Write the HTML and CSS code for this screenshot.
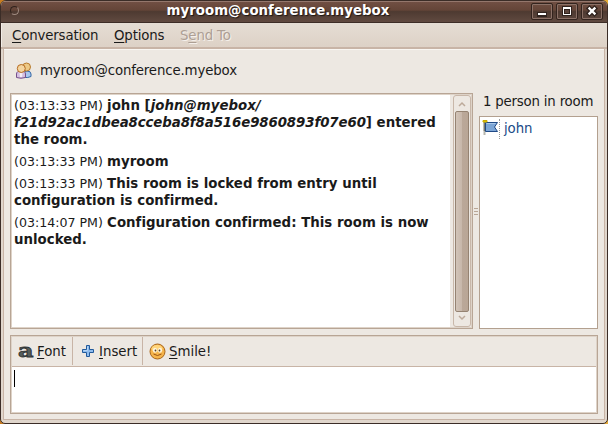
FILE: index.html
```html
<!DOCTYPE html>
<html lang="en">
<head>
<meta charset="utf-8">
<title>myroom@conference.myebox</title>
<link rel="stylesheet" href="styles.css">
</head>
<body>
<div class="window">
  <header class="titlebar">
    <span class="window-menu"></span>
    <h1>myroom@conference.myebox</h1>
    <div class="controls">
      <span class="control"><svg width="20" height="15" shape-rendering="crispEdges"><path d="M5 8h10v5H5z" fill="#30231e"/><path d="M6 9h8v2H6z" fill="#fff"/></svg></span>
      <span class="control"><svg width="20" height="15" shape-rendering="crispEdges"><path d="M5 2h10v10H5z" fill="#30231e"/><path d="M6 3h8v8H6z" fill="#fff"/><path d="M7 5h6v5H7z" fill="#30231e"/><path d="M8 6h4v3H8z" fill="#5b453c"/></svg></span>
      <span class="control"><svg width="20" height="15"><path d="M7.500 4.500l5 5m0-5l-5 5" stroke="#30231e" stroke-width="5" stroke-linecap="square"/><path d="M7.500 4.500l5 5m0-5l-5 5" stroke="#fff" stroke-width="2.400" stroke-linecap="square"/></svg></span>
    </div>
  </header>
  <nav class="menubar">
    <span class="menu-item conversation"><u>C</u>onversation</span>
    <span class="menu-item options"><u>O</u>ptions</span>
    <span class="menu-item disabled">S<u>e</u>nd To</span>
  </nav>
  <main class="content">
    <div class="room-tab">
      <svg class="people" width="18" height="18" viewBox="0 0 18 18">
        <path d="M9 15.500V11q0-2 3-2 4 0 4 3v2.500q-3 1.500-7 1z" fill="#a9c8ee" stroke="#3566a4"/>
        <circle cx="11.500" cy="5" r="4" fill="#edc986" stroke="#b77a2e"/>
        <path d="M1.500 15.500V12q0-3 4.500-3t4.500 3v3.500q-4.500 1.500-9 0z" fill="#d5bfe0" stroke="#75508b"/>
        <path d="M4.500 10.500q1.500 1 3 0l-.5 4.500H5z" fill="#f5edf5"/>
        <circle cx="6.300" cy="6.500" r="4" fill="#f4d5a0" stroke="#b5691f"/>
      </svg>
      <span>myroom@conference.myebox</span>
    </div>
    <div class="room">
      <section class="chat">
        <div class="messages">
          <p><time>(03:13:33 PM)</time> <b>john [<i>john@myebox/<br><span class="resource">f21d92ac1dbea8cceba8f8a516e9860893f07e60</span></i>] entered<br>the room.</b></p>
          <p><time>(03:13:33 PM)</time> <b>myroom</b></p>
          <p><time>(03:13:33 PM)</time> <b>This room is locked from entry until<br>configuration is confirmed.</b></p>
          <p><time>(03:14:07 PM)</time> <b>Configuration confirmed: This room is now<br>unlocked.</b></p>
        </div>
        <div class="scrollbar">
          <svg class="arrow" width="14" height="15"><path d="M4 10l3-3 3 3" fill="none" stroke="#bdaa9a" stroke-width="1.500"/></svg>
          <div class="thumb"></div>
          <svg class="arrow" width="14" height="14"><path d="M4 4l3 3 3-3" fill="none" stroke="#bdaa9a" stroke-width="1.500"/></svg>
        </div>
      </section>
      <div class="splitter"><i></i><i></i><i></i></div>
      <aside class="people-panel">
        <div class="count">1 person in room</div>
        <div class="list">
          <div class="person">
            <svg width="17" height="17" viewBox="0 0 17 17">
              <path d="M2.500 3v9" stroke="#77776d" stroke-width="2"/>
              <path d="M2.500 12v4" stroke="#b5b5ad" stroke-width="2"/>
              <path d="M3.500 3.500h12l-3 4.500 3 4.500h-12z" fill="#7ca5d5" stroke="#204a87"/>
              <path d="M4.500 4.500h9" stroke="#a9c7e8"/>
              <path d="M1 1.500h4v1.500H1z" fill="#edd400" stroke="#c9aa00"/>
            </svg>
            <span class="divider"></span>
            <span class="name">john</span>
          </div>
        </div>
      </aside>
    </div>
    <section class="composer">
      <div class="toolbar">
        <span class="tool font"><svg width="18" height="28" viewBox="0 0 18 28"><text class="font-glyph" x="1" y="19.500" textLength="15.500" lengthAdjust="spacingAndGlyphs">a</text></svg><span><u>F</u>ont</span></span>
        <span class="tool insert"><svg width="14" height="14" viewBox="0 0 14 14"><path d="M5.500 1.500h3v4h4v3h-4v4h-3v-4h-4v-3h4z" fill="#8ebbed" stroke="#225a9b" stroke-linejoin="round"/><path d="M6.500 2.500V6.500H2.500" fill="none" stroke="#b4d5f5"/></svg><span><u>I</u>nsert</span></span>
        <span class="tool smile"><svg width="17" height="17" viewBox="0 0 17 17"><circle cx="8.500" cy="8.500" r="7.500" fill="#f5b44b" stroke="#a8651b"/><ellipse cx="8" cy="5.500" rx="5.500" ry="3.500" fill="#ffd57c"/><ellipse cx="6" cy="7.300" rx="2.100" ry="2.500" fill="#fff5de"/><ellipse cx="11" cy="7.300" rx="2.100" ry="2.500" fill="#fff5de"/><circle cx="6.500" cy="7.500" r=".9" fill="#59401f"/><circle cx="10.500" cy="7.500" r=".9" fill="#59401f"/><path d="M4.500 11q4 3 8 0" fill="none" stroke="#9a5314"/></svg><span><u>S</u>mile!</span></span>
      </div>
      <div class="input"><span class="caret"></span></div>
    </section>
  </main>
</div>
</body>
</html>
```
FILE: styles.css
```css
* { box-sizing: border-box; }
body {
  margin: 0;
  width: 608px;
  height: 424px;
  overflow: hidden;
  background: linear-gradient(90deg, #c87c20 50%, #e4aa36 50%);
  color: #1a1a1a;
  font: 13.333px/17px "DejaVu Sans", sans-serif;
}
svg { display: block; flex: none; }
u { text-decoration: underline; text-decoration-thickness: 1px; text-underline-offset: 2px; text-decoration-skip-ink: none; }
.window {
  height: 424px;
  display: flex;
  flex-direction: column;
  border: 1px solid #3b2d27;
  border-radius: 6px 6px 5px 5px;
  background: #e0d6cc;
  overflow: hidden;
}
.titlebar {
  height: 22px;
  flex: none;
  display: grid;
  grid-template-columns: 30px 1fr 82px;
  border-top: 1px solid #94776c;
  border-bottom: 1px solid #3d2d27;
  background: linear-gradient(#704f43, #644538 40%, #4e3a31 48%, #604a40);
}
.window-menu {
  width: 9px;
  height: 9px;
  margin: 4px 0 0 9px;
  border: 1px solid #30221d;
  border-right-color: #a08b81;
  border-bottom-color: #a08b81;
  border-radius: 50%;
}
h1 {
  margin: 0;
  color: #fff;
  font-size: 13.333px;
  line-height: 17px;
  font-weight: bold;
  letter-spacing: 0.03px;
  text-align: center;
  text-shadow: 1px 1px 1px #1d1512;
  white-space: nowrap;
}
.controls { display: flex; gap: 3px; padding: 1px 0 0 6px; }
.control {
  width: 22px;
  height: 17px;
  flex: none;
  border: 1px solid #33241e;
  border-radius: 2px;
  box-shadow: inset 0 0 0 1px #8b7167;
}
.menubar {
  height: 26px;
  flex: none;
  display: flex;
  padding: 4px 11px;
  letter-spacing: -0.15px;
  background: linear-gradient(#e5ddd4, #ddd1c6);
  border-bottom: 2px solid #c8b4a6;
  box-shadow: inset 1px 0 #f2ece6;
}
.menu-item { white-space: nowrap; }
.conversation { width: 102px; }
.options { width: 66px; }
.disabled { color: #ad9f94; text-shadow: 1px 1px #f5f0eb; }
.content {
  height: 371px;
  flex: none;
  display: flex;
  flex-direction: column;
  margin: 0 2px;
  padding: 0 6px 6px;
  border: solid #c8b4a6;
  border-width: 0 1px 1px;
  background: #ede8e2;
  box-shadow: inset 0 1px #f9f6f2;
}
.room-tab { height: 44px; flex: none; display: flex; padding: 13px 0 0 5px; letter-spacing: -0.14px; }
.room-tab span { margin-left: 7px; }
.room { height: 236px; flex: none; display: flex; }
.chat {
  width: 463px;
  display: flex;
  border: 1px solid #b8a595;
  box-shadow: inset 0 0 0 1px #ded3c8;
  padding: 1px;
}
.messages { width: 438px; padding: 2px 0 0 2px; background: #fff; white-space: nowrap; }
.messages p { margin: 0 0 5px; height: 17px; }
.messages p:first-child { height: 51px; }
.messages p:nth-child(n+3) { height: 34px; }
.messages time { font-size: 12.6px; }
.messages b { letter-spacing: 0.02px; }
.messages .resource { letter-spacing: -0.09px; }
.scrollbar {
  width: 18px;
  margin-left: 3px;
  border: 1px solid #c8b7a9;
  border-radius: 3px;
  padding: 0 1px;
  display: flex;
  flex-direction: column;
}
.thumb {
  height: 201px;
  border: 1px solid #958372;
  border-radius: 2px;
  background: linear-gradient(90deg, #d2c4b8, #c7b7aa 50%, #baa899 52%, #b9a696);
}
.splitter { width: 6px; padding: 115px 1px 0; display: flex; flex-direction: column; gap: 2px; }
.splitter i { display: block; height: 1px; background: #b8a595; }
.people-panel { width: 119px; display: flex; flex-direction: column; }
.count { height: 23px; flex: none; padding-left: 4px; letter-spacing: -0.2px; white-space: nowrap; }
.list { flex: 1; border: 1px solid #b3a08f; background: #fff; padding: 2px; }
.person { display: flex; height: 20px; color: #204a87; letter-spacing: -0.1px; }
.name { padding-top: 1px; }
.divider { width: 0; height: 20px; border-left: 1px dotted #999; margin-right: 4px; }
.composer { height: 79px; flex: none; margin-top: 6px; border: 1px solid #b8a595; padding: 1px; box-shadow: inset 0 0 0 1px #ded3c8; }
.toolbar { height: 30px; display: flex; border-bottom: 1px solid #c8b4a6; }
.tool { display: flex; align-items: center; height: 28px; white-space: nowrap; }
.font { width: 61px; border-right: 1px solid #c8b4a6; padding-left: 5px; gap: 2px; }
.font-glyph { font: bold 19px "DejaVu Serif", serif; fill: #565d59; stroke: #2e3436; stroke-width: 0.8px; }
.insert { width: 70px; border-right: 1px solid #c8b4a6; padding-left: 8px; gap: 4px; }
.smile { padding-left: 6px; gap: 3px; }
.input { height: 45px; background: #fff; padding: 3px 2px; }
.caret { display: block; width: 1px; height: 17px; background: #000; }
```
